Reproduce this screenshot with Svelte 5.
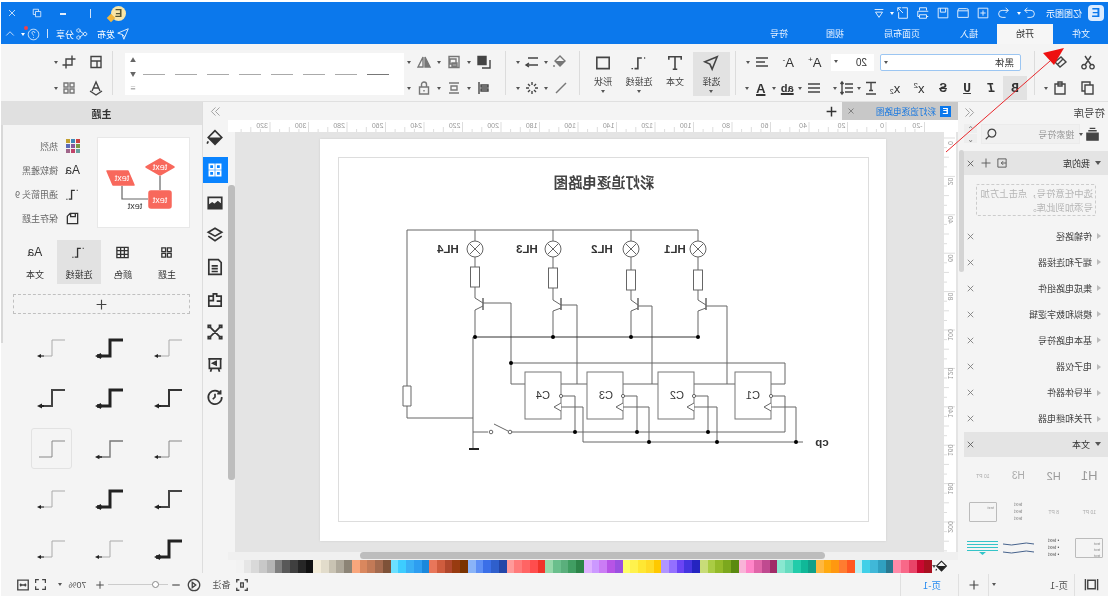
<script>
	const paths = {
		cut: 'M5 2l6 9M11 2l-6 9M4 10.5a2.2 2.2 0 1 0 .01 0M12 10.5a2.2 2.2 0 1 0 .01 0',
		brush: 'M2 8l5-5 6 5-5 5zM5 5l6 6',
		copy: 'M3 5h8v9H3zM6 5V2h8v9h-3',
		paste: 'M3 4h10v10H3zM6 2h4v4H6z',
		select: 'M2.5 2.5l11 4.5-4.5 2-2 4.5z',
		text: 'M2.5 5V2.5h11V5M8 2.5v11M6 13.5h4',
		conn: 'M2.5 3.5h1M5.5 3.5H9v9.5h3M14 12.5v1',
		rect: 'M2.5 3h11v10h-11z',
		fill: 'M8 2l5 5-5 5-5-5zM14 11v2',
		stroke: 'M2 3l10 10',
		lines: 'M2 4h10M2 11h12M11 9l3 2-3 2',
		spark: 'M8 2v3M8 11v3M2 8h3M11 8h3M4 4l2 2M10 10l2 2M12 4l-2 2M6 10l-2 2',
		front: 'M6 2.5h8v8H6zM2 6v8h8',
		aligndist: 'M3 3h10M3 13h10M5 6h6v4H5z',
		alignr: 'M13 2v12M4 5h7v2H4zM4 9h7v2H4z',
		group: 'M3 2.5h10v11H3zM6 5h6v5H6zM5 9h5v3H5z',
		lock: 'M3.5 7h9v7h-9zM5.5 7V4.5a2.5 2.5 0 0 1 5 0V7M8 10v1.5',
		flip: 'M7 3v10H2zM9 3v10h5z',
		crop: 'M5 1.5V11h9.5M1.5 5H11v9.5',
		arrange: 'M3 3h4v4H3zM9 3h4v4H9zM3 9h4v4H3zM9 9h4v4H9z',
		pin: 'M3 2.5h10v11H3zM3 7h10M7 7v6.5',
		style: 'M4 11l4-9 4 9M5.5 8h5M2 11l6 4 6-4',
		align: 'M2 4h12M5 8h9M2 12h12',
		list: 'M2 4h8M2 8h8M2 12h8M13 2v12M11.5 4l1.5-2 1.5 2M11.5 12l1.5 2 1.5-2',
		bullets: 'M2 4h12M2 8h12M2 12h12',
		tfx: 'M3 2.5h10M8 2.5v8M6 10.5h4M3 14h10',
		search: 'M7 2.5a4.5 4.5 0 1 0 .01 0M10.5 10.5L14 14',
		undo: 'M5 2L2 5l3 3M2 5h7a3.5 3.5 0 0 1 0 8H5',
		redo: 'M11 2l3 3-3 3M14 5H7a3.5 3.5 0 0 0 0 8h4',
		plusbox: 'M2.5 2.5h11v11h-11zM8 5v6M5 8h6',
		open: 'M2 5.5V13h12V5.5M2 5.5a2 2 0 0 1 2-2.5h9l1 2.5z',
		save: 'M2.5 2.5h11v11h-11zM5 2.5V7h6V2.5',
		print: 'M4 5V2h8v3M2 6h12v6h-2M4 12H2M4 10h8v4H4z',
		export: 'M9 2H3v12h10V7M8 8l6-6M10 2h4v4',
		more: 'M3 4h10M4 7l4 6 4-6z',
		send: 'M2 2l12 5-5 1.5L7 14zM9 8.5L6 11',
		share: 'M6 8l5-4M6 8l5 4M4.5 6a2 2 0 1 0 .01 0M12 2a2 2 0 1 0 .01 0M12 10a2 2 0 1 0 .01 0',
		help: 'M8 1.5a6.5 6.5 0 1 0 .01 0M6.3 6a1.8 1.8 0 1 1 2.6 1.7c-.7.4-.9.8-.9 1.6M8 11v1',
		up: 'M3 10l5-5 5 5',
		close: 'M4 4l8 8M12 4l-8 8',
		restore: 'M3 6h7v7H3zM6 6V3h7v7h-3',
		imp: 'M2.5 2.5h11v11h-11zM2.5 8H9M6.5 5.5L9 8l-2.5 2.5',
		plus: 'M8 2v12M2 8h12',
		box: 'M2.5 3h11v10h-11zM2 8h12',
		page: 'M1.5 2v12M14.5 2v12M4 3.5h8v9H4z',
		focus: 'M2 5V2h3M11 2h3v3M14 11v3h-3M5 14H2v-3M6.5 5.5h3v5h-3z',
		back: 'M8 1.5a6.5 6.5 0 1 0 .01 0M10 5v6L6 8z',
		minus: 'M3 8h10',
		full: 'M2 6V2h4M10 2h4v4M14 10v4h-4M6 14H2v-4',
		fit: 'M2 2.5h12v11H2zM4.5 8h7M4.5 8L6 6.5M4.5 8L6 9.5M11.5 8L10 6.5M11.5 8L10 9.5',
		library: 'M2 6.5h12V14H2zM3.5 4h9M5 1.5h6',
		palette: 'M2 2.5h12v11H2zM2 6h12M2 10h12M6 2.5v11M10 2.5v11',
		floppy: 'M2.5 2.5h8l3 3v8h-11zM5 2.5V6h5V2.5',
		fillpanel: 'M8 1.5l6 6-6 6-6-6zM14 11l1 2',
		image: 'M2 3h12v10H2zM2 10l3.5-3 3 2.5 2-1.5 3.5 2.5',
		layers: 'M8 2l6 3.5L8 9 2 5.5zM2 9l6 4 6-4',
		doc: 'M5 1.5h8.5v13h-11V4zM5.5 7h5.5M5.5 9.5h5.5M5.5 12h5.5',
		puzzle: 'M2.5 4.5h4v-2h3v2h4v9h-11zM2.5 9h4M9.5 4.5v4h4',
		network: 'M3 3l10 10M13 3L3 13M2 2h2v2H2zM12 2h2v2h-2zM2 12h2v2H2zM12 12h2v2h-2z',
		present: 'M2 2.5h12M3 2.5v8.5h10V2.5M4 14l1-3M12 14l-1-3M7 5l3 1.5L7 8z',
		history: 'M3 5a6 6 0 1 1-1 3M3 2v3h3M8 5v3l2 2',
		chevL: 'M8 3L3 8l5 5M13 3L8 8l5 5',
		chevR: 'M3 3l5 5-5 5M8 3l5 5-5 5'
	};
	// parts that are filled solid on top of the outline
	const solids = {
		fill: 'M3 7h10L8 12z',
		fillpanel: 'M2 7.5h12L8 13.5z',
		front: 'M6 2.5h8v8H6z',
		flip: 'M7 3v10H2z',
		library: 'M2 6.5h12V14H2z',
		image: 'M2 10l3.5-3 3 2.5 2-1.5 3.5 2.5V13H2z'
	};

	const tabs = ['文件', '开始', '插入', '页面布局', '视图', '符号'];
	const quick = [
		{ name: 'redo', cls: 'wide1' },
		{ name: 'undo' },
		{ name: 'plusbox' },
		{ name: 'open' },
		{ name: 'save' },
		{ name: 'print' },
		{ name: 'export', cls: 'wide2' },
		{ name: 'more' }
	];

	const libRows = ['传输路径', '端子和连接器', '集成电路组件', '模拟和数字逻辑', '基本电路符号', '电子仪器', '半导体器件', '开关和继电器'];
	const sideIcons = ['fillpanel', 'arrange', 'image', 'layers', 'doc', 'puzzle', 'network', 'present', 'history'];

	const themeOpts = [
		{ icon: 'colors', label: '热烈' },
		{ icon: 'aa', label: '微软雅黑' },
		{ icon: 'conn', label: '通用箭头 9' },
		{ icon: 'floppy', label: '保存主题' }
	];
	const swatchColors = ['#cc4444', '#3f88b8', '#c2a030', '#7a9a44', '#8a5a9a', '#5a6ab8', '#6aa0a0', '#c0446a', '#a0668a'];

	// weight, colour, arrow - first column is the rightmost one on screen here
	const connectors = [
		[1, '#aaa', 1], [3, '#222', 1], [1, '#aaa', 1],
		[2, '#333', 1], [3, '#222', 1], [2, '#444', 1],
		[1, '#888', 1], [1.4, '#777', 1], [1, '#888', 0],
		[2, '#444', 1], [3, '#222', 1], [1, '#aaa', 1],
		[3, '#222', 1], [1, '#aaa', 1], [1, '#aaa', 1]
	];

	const palette = [
		'#f2f2f2', '#e6e6e6', '#d9d9d9', '#c8c8c8', '#b5b5b5', '#7f7f7f', '#595959', '#3f3f3f', '#262626', '#111111',
		'#f3ecd9', '#e2dccb', '#c9c3b3', '#aea89a', '#8c8476',
		'#f9a67c', '#d9875e', '#c27a57', '#a36a4e', '#7e5238',
		'#6be0ff', '#3dcdff', '#3ab0f5', '#2e9ef0', '#1a88dc',
		'#e8765a', '#cf5c3e', '#b0472c', '#983b10', '#7a3300',
		'#8ab4f8', '#5e8ff5', '#3b6fe8', '#2f5fcc', '#2346a8',
		'#ff9a9a', '#ff7a7a', '#ff6464', '#ff4d4d', '#f0332a',
		'#96d8aa', '#6abf8c', '#5aaf7c', '#409e62', '#2c8448',
		'#dfb1ff', '#cc99ff', '#cb7cf5', '#b754e6', '#9b50e0',
		'#ffff66', '#fff24d', '#ffe733', '#ffdb26', '#ffc800',
		'#b095ff', '#9470ff', '#6a44f5', '#4434e0', '#2424c0',
		'#c8dc78', '#aacc44', '#94ba2a', '#7ca81e', '#5a8a10',
		'#f9b3d8', '#ff85c8', '#e065a8', '#c04a90', '#a02c68',
		'#88e8d0', '#66dcc0', '#22ccaa', '#10b898', '#10a088',
		'#ffb840', '#ffaa10', '#ff9810', '#ff7c30', '#ff5820',
		'#b8f0f4', '#40d0e8', '#40b8d8', '#30a0c0', '#287890',
		'#ff8aa8', '#f86888', '#e84468', '#c80830', '#a81020'
	];

	// rulers: 20 units are 38.5px on screen
	const hMarks = [];
	for (let v = -20; v <= 320; v += 20) hMarks.push({ v, x: 72 + v * 1.925 });
	const vMarks = [];
	for (let v = 0; v <= 200; v += 20) vMarks.push({ v, y: v * 1.92 + 11 });

	// diagram wires, written in screen coordinates and flipped back by the group below
	const wires = [
		'M407 230H698M407 230V386M407 406V418H473',
		'M475 230V241M475 257V267M475 287V298L483 303M483 306L475 310V337',
		'M553 230V241M553 257V268M553 288V300L561 305M561 308L553 311V337',
		'M631 230V241M631 257V270M631 289V300L638 305M638 308L631 311V337',
		'M698 230V241M698 257V270M698 289V300L706 305M706 308L698 311V337',
		'M483 303H511V384H525M561 305H577V384M638 306H652V384M706 306H727V384',
		'M561 384H587M623 384H658M694 384H735M771 384H785V363H511',
		'M561 396H575V432M623 396H637V432M694 396H708V432M771 396H785V432H510',
		'M561 407H583V442H803M623 407H649V442M694 407H717V442M771 407H796V442',
		'M473 337V448M473 432H488'
	];
	const boxes = [525, 587, 658, 735];
	const lamps = [475, 553, 631, 698];
	const resistors = [[475, 267], [553, 268], [631, 270], [698, 270]];
	const bases = [483, 561, 638, 706];
	const dots = [[475, 337], [553, 337], [631, 337], [698, 337], [511, 363], [575, 432], [637, 432], [708, 432], [649, 442], [717, 442], [796, 442]];
	const labels = [['HL4', 448], ['HL3', 527], ['HL2', 602], ['HL1', 675]];
	const chipNames = [['C4', 543], ['C3', 606], ['C2', 677], ['C1', 753]];
</script>

{#snippet ico(name, size = 16)}
	<svg class="ico" width={size} height={size} viewBox="0 0 16 16">
		{#if solids[name]}<path class="solid" d={solids[name]} />{/if}
		<path d={paths[name]} />
	</svg>
{/snippet}

{#snippet btn(name, cls = '', caret = false)}
	<div class="ib {cls}">
		{@render ico(name)}
		{#if caret}<i class="caret"></i>{/if}
	</div>
{/snippet}

<div class="screen">
	<header class="titlebar">
		<div class="title-row">
			<div class="logo">E</div>
			<span class="appname">亿图图示</span>
			<div class="quick">
				{#each quick as q}
					<div class="q {q.cls ?? ''}">
						{@render ico(q.name, 14)}
						{#if q.cls}<i class="caret light"></i>{/if}
					</div>
				{/each}
			</div>
			<div class="spacer"></div>
			<div class="badge"><span>E</span><i></i></div>
			<span class="vline"></span>
			<div class="winbtns">
				<span class="winmin"></span>
				{@render ico('restore', 12)}
				{@render ico('close', 12)}
			</div>
		</div>
		<div class="tab-row">
			{#each tabs as t, i}
				<div class="tab" class:active={i === 1} class:long={t.length > 2}>{t}</div>
			{/each}
			<div class="spacer"></div>
			<div class="tb-action">{@render ico('send', 14)}<span>发布</span></div>
			<div class="tb-action">{@render ico('share', 14)}<span>分享</span></div>
			<span class="vline small"></span>
			<div class="help">{@render ico('help', 13)}<i class="reddot"></i><i class="caret light"></i></div>
			{@render ico('up', 12)}
		</div>
	</header>

	<section class="ribbon">
		<div class="rgroup clip">
			<div class="rrow">{@render btn('cut')}{@render btn('brush')}</div>
			<div class="rrow">{@render btn('copy')}{@render btn('paste', '', true)}</div>
		</div>
		<div class="rsep"></div>
		<div class="rgroup font">
			<div class="rrow">
				<div class="fontbox">黑体<i class="caret"></i></div>
				<div class="sizebox">20<i class="caret"></i></div>
				<div class="ib wide letter">A<sup>+</sup></div>
				<div class="ib wide letter">A<sup>-</sup></div>
				{@render btn('align', 'wide', true)}
			</div>
			<div class="rrow fontstyle">
				<div class="ib letter serif on">B</div>
				<div class="ib letter serif it">I</div>
				<div class="ib letter serif under">U</div>
				<div class="ib letter serif strike">S</div>
				<div class="ib letter">x<sup>2</sup></div>
				<div class="ib letter">x<sub>2</sub></div>
				{@render btn('tfx', '', true)}
				{@render btn('list', '', true)}
				{@render btn('bullets', 'wide first', true)}
				<div class="ib wide letter tiny under2">ab<i class="caret"></i></div>
				<div class="ib wide letter under2">A<i class="caret"></i></div>
			</div>
		</div>
		<div class="rsep"></div>
		<div class="tools">
			<div class="tool on">{@render ico('select', 18)}<span>选择</span><i class="caret"></i></div>
			<div class="tool">{@render ico('text', 18)}<span>文本</span></div>
			<div class="tool">{@render ico('conn', 18)}<span>连接线</span><i class="caret"></i></div>
			<div class="tool">{@render ico('rect', 18)}<span>形状</span><i class="caret"></i></div>
		</div>
		<div class="rsep"></div>
		<div class="rgroup pair">
			<div class="rrow">{@render btn('fill', 'faded', true)}{@render btn('lines', '', true)}</div>
			<div class="rrow">{@render btn('stroke', 'faded', true)}{@render btn('spark', '', true)}</div>
		</div>
		<div class="rsep"></div>
		<div class="rgroup triple">
			<div class="rrow">{@render btn('front', '', true)}{@render btn('group', 'faded', true)}{@render btn('flip', 'faded', true)}</div>
			<div class="rrow">{@render btn('alignr', '', true)}{@render btn('aligndist', 'faded', true)}{@render btn('lock', 'faded', true)}</div>
		</div>
		<div class="linebox">
			<div class="dashes">
				{#each Array(8) as _}<span></span>{/each}
			</div>
			<div class="spin"><i>▲</i><i>▼</i><i>≡</i></div>
		</div>
		<div class="rsep wide"></div>
		<div class="rgroup clip2">
			<div class="rrow">{@render btn('pin')}{@render btn('crop', '', true)}</div>
			<div class="rrow">{@render btn('style')}{@render btn('arrange', 'faded', true)}</div>
		</div>
	</section>

	<main class="workspace">
		<aside class="library">
			<div class="lib-head"><span>符号库</span>{@render ico('chevL', 13)}</div>
			<div class="lib-body">
				<div class="lib-list">
					<div class="lib-search">
						<div class="libicon">{@render ico('library', 15)}<i class="caret"></i></div>
						<div class="searchbox"><span>搜索符号</span>{@render ico('search', 14)}</div>
						<div class="updown"><i>⌃</i><i>⌄</i></div>
					</div>
					<div class="sec-head"><i class="tri down"></i><span>我的库</span><div class="spacer"></div>{@render ico('imp', 12)}{@render ico('plus', 12)}{@render ico('close', 11)}</div>
					<div class="droparea">选中任意符号，点击上方加<br />号添加到此库。</div>
					{#each libRows as row}
						<div class="lib-row"><i class="tri"></i><span>{row}</span><div class="spacer"></div>{@render ico('close', 11)}</div>
					{/each}
					<div class="sec-head text"><i class="tri down"></i><span>文本</span><div class="spacer"></div>{@render ico('close', 11)}</div>
					<div class="thumbs">
						<span class="h h1">H1</span><span class="h h2">H2</span><span class="h h3">H3</span><span class="pt">10 PT</span>
						<span class="pt">10 PT</span><span class="pt">8 PT</span>
						<span class="stack">text<br />text<br />text</span>
						<span class="framed"><em>text</em></span>
						<span class="framed rows"><em>text<br />text<br />text</em></span>
						<span class="stack bullets">• text<br />• text<br />• text</span>
						<svg width="31" height="14" viewBox="0 0 31 14" fill="none" stroke="#46628c">
							<path d="M0 3Q8 1 15 3T31 3M0 11Q8 9 15 11T31 11" />
						</svg>
						<svg width="31" height="16" viewBox="0 0 31 16" fill="none" stroke="#35c4c8">
							<path d="M0 1.5h31M0 4.5h31M0 7.5h31M0 10.5h31" />
							<path d="M12 12h7l-3.5 3z" fill="#35c4c8" stroke="none" />
						</svg>
					</div>
				</div>
				<div class="lib-scroll"><span></span></div>
			</div>
		</aside>

		<div class="center">
			<div class="doctabs">
				<div class="doctab">
					<span class="docicon">E</span>
					<span class="docname">彩灯追逐电路图</span>
					{@render ico('close', 10)}
				</div>
				<div class="addtab">{@render ico('plus', 13)}</div>
			</div>
			<svg class="hruler" width="730" height="12">
				<rect width="730" height="12" fill="#fff" />
				{#each hMarks as m}
					<line x1={m.x} x2={m.x} y1="2" y2="12" />
					<line x1={m.x + 9.6} x2={m.x + 9.6} y1="9" y2="12" />
					<line x1={m.x + 19.2} x2={m.x + 19.2} y1="7" y2="12" />
					<line x1={m.x + 28.9} x2={m.x + 28.9} y1="9" y2="12" />
					<text x={m.x + 2} y="8">{m.v}</text>
				{/each}
			</svg>
			<div class="stage">
				<svg class="vruler" width="12" height="420">
					<rect width="12" height="420" fill="#fff" />
					{#each vMarks as m}
						<line x1="1" x2="12" y1={m.y - 5} y2={m.y - 5} />
						<line x1="9" x2="12" y1={m.y + 4.6} y2={m.y + 4.6} />
						<line x1="7" x2="12" y1={m.y + 14.2} y2={m.y + 14.2} />
						<line x1="9" x2="12" y1={m.y + 23.9} y2={m.y + 23.9} />
						<text transform="translate(8 {m.y}) rotate(-90)" text-anchor="middle">{m.v}</text>
					{/each}
				</svg>
				<div class="canvas">
					<svg class="page" width="566" height="402" viewBox="0 0 566 402">
						<g transform="translate(886 -139) scale(-1 1)" fill="none" stroke="#666" stroke-width="1">
							<rect x="338.5" y="157.5" width="530" height="364" stroke="#ddd" />
							{#each wires as d}<path {d} />{/each}
							<path d="M475 337H698" stroke="#333" />
							<path d="M407 386h-4v20h8v-20z" fill="#fff" />
							{#each resistors as [x, y]}<rect x={x - 4.5} {y} width="9" height="20" fill="#fff" />{/each}
							{#each lamps as x}
								<circle cx={x} cy="249" r="8" fill="#fff" />
								<path d="M{x - 5.5} 243.5l11 11M{x + 5.5} 243.5l-11 11" />
							{/each}
							{#each bases as x}<path d="M{x} 298V310" stroke-width="1.5" />{/each}
							{#each boxes as x}
								<rect x={x} y="372" width="36" height="47" fill="#fff" stroke="#777" />
								<path d="M{x + 36} 403l-7 4 7 4" fill="#fff" />
								<circle cx={x + 36} cy="396" r="1.6" fill="#fff" />
							{/each}
							<circle cx="491" cy="432" r="1.8" fill="#fff" />
							<circle cx="510" cy="432" r="1.8" fill="#fff" />
							<path d="M494 424L508 431" />
							<path d="M469 449H479" stroke="#222" stroke-width="2" />
							{#each dots as [x, y]}<circle cx={x} cy={y} r="2" fill="#000" stroke="none" />{/each}
						</g>
						<text class="doc-title" x="282" y="49" text-anchor="middle">彩灯追逐电路图</text>
						{#each labels as [t, x]}
							<text class="hl" x={886 - x} y="114" text-anchor="middle">{t}</text>
						{/each}
						{#each chipNames as [t, x]}
							<text class="chip" x={886 - x} y="260" text-anchor="middle">{t}</text>
						{/each}
						<text class="hl" x="64" y="307" text-anchor="middle">cp</text>
					</svg>
				</div>
				<div class="vscroll"><span></span></div>
			</div>
			<div class="hscroll"><span></span></div>
			<div class="palette">
				<div class="fillbtn">{@render ico('fillpanel', 13)}<i class="caret"></i></div>
				{#each palette.slice().reverse() as c}
					<span class="sw" style="background: {c}"></span>
				{/each}
			</div>
		</div>

		<nav class="sidebar">
			<div class="collapse">{@render ico('chevR', 13)}</div>
			{#each sideIcons as s, i}
				<div class="sideicon" class:active={i === 1}>{@render ico(s, 18)}</div>
			{/each}
		</nav>

		<aside class="theme">
			<div class="theme-head">主题</div>
			<div class="theme-top">
				<svg class="preview" width="93" height="91" viewBox="0 0 93 91">
					<rect x="0.5" y="0.5" width="92" height="90" fill="#fff" stroke="#e8e8e8" />
					<path d="M30 39V53M68 49V62H42" fill="none" stroke="#666" stroke-width="1.2" />
					<g fill="#f8685c" stroke="#f8685c" stroke-width="1.5" stroke-linejoin="round">
						<path d="M30 22L44 30 30 38 16 30z" />
						<path d="M83 34H62L56 48H77z" />
						<rect x="19" y="54" width="22" height="17" rx="2" />
					</g>
					<text class="pv" x="30" y="33" fill="#fff">text</text>
					<text class="pv" x="68" y="44" fill="#fff">text</text>
					<text class="pv" x="30" y="66" fill="#fff">text</text>
					<text class="pv" x="55" y="72" fill="#333">text</text>
				</svg>
				<ul class="opts">
					{#each themeOpts as o}
						<li>
							{#if o.icon === 'colors'}
								<div class="colors">
									{#each swatchColors as c}<span style="background: {c}"></span>{/each}
								</div>
							{:else if o.icon === 'aa'}
								<b class="aa">Aa</b>
							{:else}
								{@render ico(o.icon, 15)}
							{/if}
							<span>{o.label}</span>
						</li>
					{/each}
				</ul>
			</div>
			<div class="theme-tabs">
				<div class="ttab">{@render ico('arrange', 15)}<span>主题</span></div>
				<div class="ttab">{@render ico('palette', 15)}<span>颜色</span></div>
				<div class="ttab on">{@render ico('conn', 15)}<span>连接线</span></div>
				<div class="ttab"><b class="aa">Aa</b><span>文本</span></div>
			</div>
			<div class="addrow">{@render ico('plus', 13)}</div>
			<div class="conn-grid">
				{#each connectors as [w, color, arrow], i}
					<div class="conn-cell" class:picked={i === 8}>
						<svg width="30" height="22" viewBox="0 0 30 22" fill="none">
							<path d="M2 3H15V19H28" stroke={color} stroke-width={w} />
							{#if arrow}
								<path d="M23 19H28" stroke="#222" stroke-width={Math.max(w, 1)} />
								<path d="M30 19l-{3 + w} -{1.5 + w / 2}v{3 + w}z" fill="#222" />
							{/if}
						</svg>
					</div>
				{/each}
			</div>
			<div class="theme-scroll"></div>
		</aside>

		<svg class="arrow" width="130" height="110" viewBox="0 0 130 110">
			<path d="M126 106L14 8" stroke="#e8262a" stroke-width="1" />
			<path d="M8 2L29 7 18 19z" fill="#ee1111" />
		</svg>
	</main>

	<footer class="status">
		<div class="st fit-l">{@render ico('page', 15)}</div>
		<span class="stsep"></span>
		<span class="st pg">页-1</span>
		<span class="stsep gap"></span>
		<i class="caret st-c"></i>
		<div class="st add">{@render ico('plus', 12)}</div>
		<span class="stsep"></span>
		<span class="st pg active">页-1</span>
		<span class="stsep"></span>
		<div class="spacer"></div>
		<div class="st">{@render ico('focus', 14)}</div>
		<span class="st note">备注</span>
		<div class="st back">{@render ico('back', 14)}</div>
		<div class="st">{@render ico('minus', 12)}</div>
		<div class="slider"><span></span></div>
		<div class="st">{@render ico('plus', 10)}</div>
		<span class="st zoomtxt">70%</span>
		<i class="caret zc"></i>
		<div class="st">{@render ico('full', 13)}</div>
		<div class="st last">{@render ico('fit', 14)}</div>
	</footer>
</div>

<style>
	:global(body) {
		margin: 0;
		background: #fff;
		overflow: hidden;
	}

	.screen {
		width: 1108px;
		height: 601px;
		padding: 2px 1px 5px 0;
		box-sizing: border-box;
		display: flex;
		flex-direction: column;
		transform: scaleX(-1);
		font-family: 'Noto Sans CJK SC', 'Noto Sans', sans-serif;
		font-size: 10px;
		color: #333;
		overflow: hidden;
	}

	.spacer { flex: 1; }

	.ico {
		fill: none;
		stroke: #444;
		stroke-width: 1.4;
		flex: none;
		display: block;
	}
	.ico .solid { fill: #444; stroke: none; }

	.caret {
		display: block;
		width: 0;
		height: 0;
		border-left: 2.5px solid transparent;
		border-right: 2.5px solid transparent;
		border-top: 3px solid #555;
	}

	/* title bar */
	.titlebar {
		height: 42px;
		background: #0b78ec;
		color: #fff;
		flex: none;
		display: flex;
		flex-direction: column;
	}
	.titlebar .ico { stroke: #e2eefc; stroke-width: 1.1; }
	.title-row {
		height: 22px;
		display: flex;
		align-items: center;
		padding-left: 4px;
	}
	.logo {
		width: 16px;
		height: 16px;
		border-radius: 4px;
		background: #dcecff;
		color: #0b78ec;
		font: bold 13px/16px 'Liberation Sans', sans-serif;
		text-align: center;
	}
	.appname { margin-left: 6px; font-size: 9px; width: 42px; }
	.quick { display: flex; }
	.q {
		width: 20px;
		padding-left: 3px;
		box-sizing: border-box;
		display: flex;
		align-items: center;
		gap: 2px;
	}
	.q.wide1 { width: 27px; }
	.q.wide2 { width: 24px; }
	.badge {
		width: 15px;
		height: 15px;
		border-radius: 50%;
		background: #f8e6a8;
		color: #553;
		font: bold 11px/15px 'Liberation Sans', sans-serif;
		text-align: center;
		position: relative;
	}
	.badge i {
		position: absolute;
		right: -3px;
		bottom: 0;
		width: 6px;
		height: 6px;
		background: #f2b53a;
		transform: rotate(45deg);
	}
	.vline {
		width: 1px;
		height: 9px;
		background: #cfe2fa;
		margin-left: 20px;
	}
	.winbtns {
		display: flex;
		align-items: center;
		gap: 13px;
		margin: 0 5px 0 24px;
	}
	.winmin { width: 6px; height: 2px; background: #e2eefc; margin-right: 4px; margin-top: 2px; }
	.tab-row {
		height: 20px;
		display: flex;
		align-items: flex-end;
		padding-right: 3px;
	}
	.tab {
		height: 20px;
		padding: 0 19px;
		font-size: 9px;
		line-height: 20px;
		color: #eaf3ff;
	}
	.tab:first-child { padding-left: 18px; }
	.tab.long { padding: 0 21px; }
	.tab.active { background: #f6f6f6; color: #333; }
	.tb-action {
		display: flex;
		align-items: center;
		gap: 1px;
		height: 20px;
		margin-right: 8px;
		font-size: 9px;
	}
	.vline.small { margin: 0 0 6px 0; }
	.help {
		display: flex;
		align-items: center;
		position: relative;
		height: 20px;
		margin: 0 3px 0 7px;
		gap: 2px;
	}
	.caret.light { border-top-color: #fff; }
	.reddot {
		position: absolute;
		left: 12px;
		top: 2px;
		width: 4px;
		height: 4px;
		border-radius: 50%;
		background: #f0404a;
	}
	.tab-row > .ico { margin-bottom: 4px; margin-left: 2px; }

	/* ribbon */
	.ribbon {
		height: 58px;
		flex: none;
		display: flex;
		background: #f4f4f4;
		border-bottom: 1px solid #e0e0e0;
		box-sizing: border-box;
	}
	.rgroup {
		display: flex;
		flex-direction: column;
		gap: 2px;
		padding-top: 6px;
	}
	.rrow {
		display: flex;
		align-items: center;
		height: 24px;
	}
	.rsep {
		width: 1px;
		height: 44px;
		margin-top: 7px;
		background: #dcdcdc;
		flex: none;
	}
	.ib {
		width: 24px;
		height: 24px;
		position: relative;
		display: flex;
		align-items: center;
		justify-content: center;
		flex: none;
	}
	.ib .caret { position: absolute; right: -2px; top: 11px; }
	.ib.wide { width: 26.5px; }
	.ib.first { margin-left: 8px; }
	.ib.faded .ico { stroke: #777; }
	.ib.faded .solid { fill: #777; }
	.clip { width: 73px; padding-left: 6px; box-sizing: border-box; }
	.clip .ib { width: 28px; }
	.font { width: 298px; box-sizing: border-box; padding-left: 7px; }
	.font .rrow:first-child { padding-left: 6px; }
	.fontbox {
		width: 141px;
		height: 17px;
		box-sizing: border-box;
		border: 1px solid #9cc6f2;
		border-radius: 2px;
		background: #fff;
		font-size: 9.5px;
		line-height: 15px;
		padding: 0 8px 0 6px;
		position: relative;
		color: #333;
	}
	.fontbox .caret, .sizebox .caret { position: absolute; right: 3px; top: 6px; }
	.sizebox {
		width: 43px;
		height: 17px;
		margin-left: 6px;
		background: #fff;
		font: 10px/17px 'Liberation Sans', sans-serif;
		padding-left: 7px;
		box-sizing: border-box;
		position: relative;
		margin-right: 3px;
	}
	.letter {
		font: 13px 'Liberation Sans', sans-serif;
		color: #333;
	}
	.letter sup { font-size: 8px; margin-top: -6px; }
	.letter sub { font-size: 7px; margin-top: 6px; }
	.serif { font: bold 13px 'Liberation Mono', monospace; }
	.on { background: #e2e2e2; }
	.it { font-style: italic; }
	.under { text-decoration: underline; }
	.strike { text-decoration: line-through; }
	.tiny { font-size: 11px; font-weight: bold; }
	.under2 { text-decoration: underline; text-decoration-thickness: 2px; font-weight: bold; }
	.tools {
		display: flex;
		width: 155px;
		padding-left: 5px;
		box-sizing: border-box;
		flex: none;
	}
	.tool {
		width: 36px;
		height: 44px;
		margin-top: 8px;
		display: flex;
		flex-direction: column;
		align-items: center;
		padding-top: 2px;
		box-sizing: border-box;
		font-size: 9px;
		color: #444;
	}
	.tool.on { width: 37px; }
	.tool span { margin-top: 3px; line-height: 13px; }
	.tool .caret { margin-top: 2px; }
	.pair { width: 73px; padding-left: 5px; box-sizing: border-box; }
	.pair .ib { width: 28px; }
	.triple { width: 101px; padding-left: 6px; box-sizing: border-box; }
	.triple .ib { width: 30px; }
	.linebox {
		width: 279px;
		height: 42px;
		margin-top: 9px;
		background: #fff;
		display: flex;
		align-items: center;
		justify-content: space-between;
		padding: 0 3px 0 15px;
		box-sizing: border-box;
		flex: none;
	}
	.dashes { display: flex; gap: 10px; }
	.dashes span { width: 22px; height: 1px; background: #aaa; }
	.dashes span:first-child { background: #777; }
	.spin {
		display: flex;
		flex-direction: column;
		font-size: 6px;
		line-height: 14px;
		color: #666;
		width: 10px;
		text-align: center;
	}
	.spin i { font-style: normal; }
	.rsep.wide { margin-left: 12px; }
	.clip2 { padding-left: 2px; }
	.clip2 .ib { width: 27px; }

	/* main area */
	.workspace {
		height: 471px;
		flex: none;
		display: flex;
		background: #f4f4f4;
		position: relative;
	}

	.library {
		width: 150px;
		flex: none;
		display: flex;
		flex-direction: column;
		box-sizing: border-box;
	}
	.lib-head {
		height: 20px;
		flex: none;
		display: flex;
		justify-content: space-between;
		align-items: center;
		padding: 0 5px 0 3px;
		font-size: 10.5px;
		color: #444;
	}
	.lib-head .ico { stroke: #999; stroke-width: 1.1; }
	.lib-body { flex: 1; display: flex; min-height: 0; }
	.lib-list { width: 144px; flex: none; }
	.lib-scroll { width: 6px; padding-top: 28px; }
	.lib-scroll span { display: block; height: 122px; width: 5px; background: #d4d4d4; border-radius: 3px; }
	.lib-search {
		height: 20px;
		margin-top: 2px;
		display: flex;
		align-items: center;
		padding-left: 8px;
	}
	.libicon { position: relative; width: 20px; }
	.libicon .caret { position: absolute; right: -1px; top: 6px; }
	.searchbox {
		width: 100px;
		height: 20px;
		box-sizing: border-box;
		background: #f0f0f0;
		border: 1px solid #ebebeb;
		display: flex;
		align-items: center;
		justify-content: space-between;
		padding: 0 2px 0 5px;
		color: #999;
		font-size: 9px;
	}
	.updown {
		display: flex;
		flex-direction: column;
		margin-left: 4px;
		width: 13px;
		height: 20px;
		font-size: 8px;
		line-height: 10px;
		color: #777;
		text-align: center;
	}
	.updown i { font-style: normal; background: #eee; display: block; height: 9px; margin-bottom: 1px; }
	.sec-head {
		height: 24px;
		margin-top: 7px;
		background: #e4e4e4;
		display: flex;
		align-items: center;
		gap: 4px;
		padding: 0 1.5px 0 7px;
		font-size: 9px;
	}
	.sec-head.text { height: 25px; margin-top: 0; }
	.sec-head .ico { stroke: #555; stroke-width: 1.2; }
	.tri {
		width: 0;
		height: 0;
		border-top: 3px solid transparent;
		border-bottom: 3px solid transparent;
		border-right: 4px solid #bbb;
		margin-right: 2px;
	}
	.tri.down {
		border-left: 3px solid transparent;
		border-right: 3px solid transparent;
		border-top: 4px solid #555;
		border-bottom: 0;
		margin-right: 1px;
	}
	.droparea {
		margin: 9px 12px 7px 12px;
		height: 32px;
		box-sizing: border-box;
		border: 1px dashed #ccc;
		border-radius: 2px;
		color: #b5b5b5;
		font-size: 9.4px;
		line-height: 14px;
		padding: 1px 2px;
		white-space: nowrap;
	}
	.lib-row {
		height: 26.1px;
		display: flex;
		align-items: center;
		gap: 3px;
		padding: 0 1.5px 0 7px;
		font-size: 9px;
		color: #444;
	}
	.lib-row .ico { stroke: #777; stroke-width: 1.2; }
	.thumbs {
		display: grid;
		grid-template-columns: repeat(4, 35.5px);
		grid-auto-rows: 36px;
		place-items: center;
		padding: 1px 0 0 1px;
		color: #aaa;
		font-family: 'Liberation Sans', sans-serif;
	}
	.h { font-weight: 400; }
	.h1 { font-size: 13px; color: #999; }
	.h2 { font-size: 11px; color: #999; }
	.h3 { font-size: 10px; color: #aaa; }
	.pt { font-size: 5px; color: #aaa; }
	.stack { font-size: 5px; line-height: 7px; color: #888; text-align: center; }
	.stack.bullets { color: #555; }
	.framed {
		width: 28px;
		height: 20px;
		border: 1px solid #bbb;
		border-radius: 1px;
		font-size: 4px;
		line-height: 6px;
		padding: 2px;
		box-sizing: border-box;
		color: #888;
	}
	.framed em { font-style: normal; }

	.center {
		width: 730px;
		flex: none;
		display: flex;
		flex-direction: column;
	}
	.doctabs {
		height: 18px;
		flex: none;
		display: flex;
		align-items: center;
	}
	.doctab {
		width: 116px;
		height: 18px;
		background: #c8c8c8;
		display: flex;
		align-items: center;
		padding: 0 4px 0 7px;
		box-sizing: border-box;
		gap: 4px;
		color: #1878e0;
		font-size: 8.6px;
	}
	.doctab .ico { stroke: #777; margin-left: auto; }
	.docicon {
		width: 11px;
		height: 11px;
		background: #0b78ec;
		color: #fff;
		font: bold 9px/11px 'Liberation Sans', sans-serif;
		text-align: center;
	}
	.addtab { margin-left: 4px; }
	.addtab .ico { stroke: #333; stroke-width: 1.8; }
	.hruler { flex: none; display: block; }
	.hruler line, .vruler line { stroke: #ddd; stroke-width: 1; }
	.hruler text, .vruler text {
		font: 7px 'Liberation Sans', sans-serif;
		fill: #999;
	}
	.stage {
		height: 420px;
		flex: none;
		display: flex;
		background: #e4e4e4;
	}
	.vruler { flex: none; margin-left: 2px; display: block; }
	.canvas {
		width: 709px;
		flex: none;
		padding: 7px 0 0 58px;
		box-sizing: border-box;
		background: #e4e4e4;
	}
	.page {
		display: block;
		background: #fff;
		box-shadow: 0 0 2px #ccc;
	}
	.doc-title { font-size: 14.4px; font-weight: 700; fill: #444; }
	.hl { font: 700 11.5px 'Liberation Sans', sans-serif; fill: #333; }
	.chip { font: 11px 'Liberation Sans', sans-serif; fill: #333; }
	.vscroll {
		width: 7px;
		background: #f4f4f4;
		padding-top: 53px;
		flex: none;
	}
	.vscroll span { display: block; height: 295px; background: #bdbdbd; border-radius: 3px; }
	.hscroll {
		height: 8px;
		flex: none;
		background: #f0f0f0;
		padding-left: 133px;
	}
	.hscroll span { display: block; width: 465px; height: 7px; background: #bdbdbd; border-radius: 4px; }
	.palette {
		height: 13px;
		flex: none;
		display: flex;
		align-items: stretch;
		background: #f4f4f4;
		padding-left: 10px;
	}
	.fillbtn {
		width: 14px;
		margin-right: 2px;
		position: relative;
	}
	.fillbtn .ico { stroke: #222; }
	.fillbtn .solid { fill: #222; }
	.fillbtn .caret { position: absolute; right: -2px; top: 5px; }
	.sw { width: 7.74px; flex: none; }

	.sidebar {
		width: 26px;
		flex: none;
		display: flex;
		flex-direction: column;
		align-items: stretch;
		border-right: 1px solid #ddd;
		box-sizing: border-box;
	}
	.collapse {
		height: 19.8px;
		display: flex;
		align-items: center;
		justify-content: center;
	}
	.collapse .ico { stroke: #999; stroke-width: 1.1; }
	.sideicon {
		height: 26px;
		margin: 3.2px 0;
		display: flex;
		align-items: center;
		justify-content: center;
	}
	.sideicon .ico { stroke: #333; stroke-width: 1.5; }
	.sideicon .solid { fill: #333; }
	.sideicon.active { background: #0a84ff; }
	.sideicon.active .ico { stroke: #fff; }

	.theme {
		width: 201px;
		flex: none;
		position: relative;
	}
	.theme-head {
		height: 23px;
		background: #e0e0e0;
		text-align: center;
		font-size: 10px;
		font-weight: 700;
		line-height: 23px;
	}
	.theme-scroll {
		position: absolute;
		right: 0;
		top: 23px;
		width: 2px;
		height: 218px;
		background: #d8d8d8;
	}
	.theme-top {
		display: flex;
		padding: 12px 0 0 12px;
	}
	.preview { display: block; flex: none; }
	.pv { font: 9px 'Liberation Sans', sans-serif; text-anchor: middle; }
	.opts {
		list-style: none;
		margin: 0;
		padding: 0 0 0 17px;
	}
	.opts li {
		height: 24px;
		display: flex;
		align-items: center;
		gap: 7px;
		font-size: 9px;
		color: #666;
	}
	.opts li:first-child { margin-top: -3px; }
	.opts li > :first-child { width: 15px; flex: none; }
	.opts .ico { stroke: #333; }
	.colors {
		display: grid;
		grid-template-columns: repeat(3, 4px);
		gap: 1px;
	}
	.colors span { height: 4px; }
	.aa {
		font: 400 12px 'Liberation Sans', sans-serif;
		color: #333;
	}
	.theme-tabs {
		display: flex;
		padding-left: 13px;
		margin-top: 10px;
	}
	.ttab {
		width: 44px;
		height: 44px;
		box-sizing: border-box;
		display: flex;
		flex-direction: column;
		align-items: center;
		justify-content: space-between;
		padding: 5px 0 3px;
		font-size: 9px;
	}
	.ttab .ico { stroke: #333; }
	.ttab.on { background: #e2e2e2; }
	.addrow {
		margin: 10px 12px 0 12px;
		height: 20px;
		box-sizing: border-box;
		border: 1px dashed #c0c0c0;
		display: flex;
		align-items: center;
		justify-content: center;
	}
	.addrow .ico { stroke: #444; }
	.conn-grid {
		display: grid;
		grid-template-columns: repeat(3, 58.5px);
		grid-auto-rows: 50.3px;
		padding: 9px 0 0 4px;
		justify-items: center;
		align-items: center;
	}
	.conn-cell {
		width: 41px;
		height: 41px;
		display: flex;
		align-items: center;
		justify-content: center;
		box-sizing: border-box;
		border: 1px solid transparent;
		border-radius: 3px;
	}
	.conn-cell.picked { border: 1px solid #e2e2e2; }

	.arrow {
		position: absolute;
		left: 36px;
		top: -56px;
		z-index: 5;
		pointer-events: none;
	}

	/* status */
	.status {
		height: 23px;
		flex: none;
		display: flex;
		align-items: center;
		background: #f4f4f4;
		font-size: 9px;
		color: #555;
	}
	.st {
		display: flex;
		align-items: center;
		justify-content: center;
	}
	.st .ico { stroke: #444; stroke-width: 1.5; }
	.fit-l { width: 33px; }
	.stsep { width: 1px; height: 22px; background: #e0e0e0; flex: none; }
	.pg { width: 30px; font-size: 9.5px; }
	.status > .stsep.gap { margin-left: 55px; }
	.st-c { margin-left: -8px; margin-right: 3px; }
	.add { width: 30px; }
	.pg.active { width: 57px; color: #2a8cf0; padding-left: 17px; box-sizing: border-box; justify-content: flex-start; }
	.note { margin: 0 11px 0 4px; }
	.back { margin-right: 5px; }
	.slider {
		width: 60px;
		height: 1px;
		margin: 0 3px 0 2px;
		background: #ccc;
		position: relative;
	}
	.slider span {
		position: absolute;
		left: 9px;
		top: -3px;
		width: 5px;
		height: 5px;
		border: 1px solid #888;
		border-radius: 50%;
		background: #fff;
	}
	.zoomtxt { width: 18px; margin-left: 9px; font: 9px 'Liberation Sans', sans-serif; }
	.zc { margin: 0 11px 0 6px; }
	.last { margin: 0 15px 0 4.5px; }
</style>
